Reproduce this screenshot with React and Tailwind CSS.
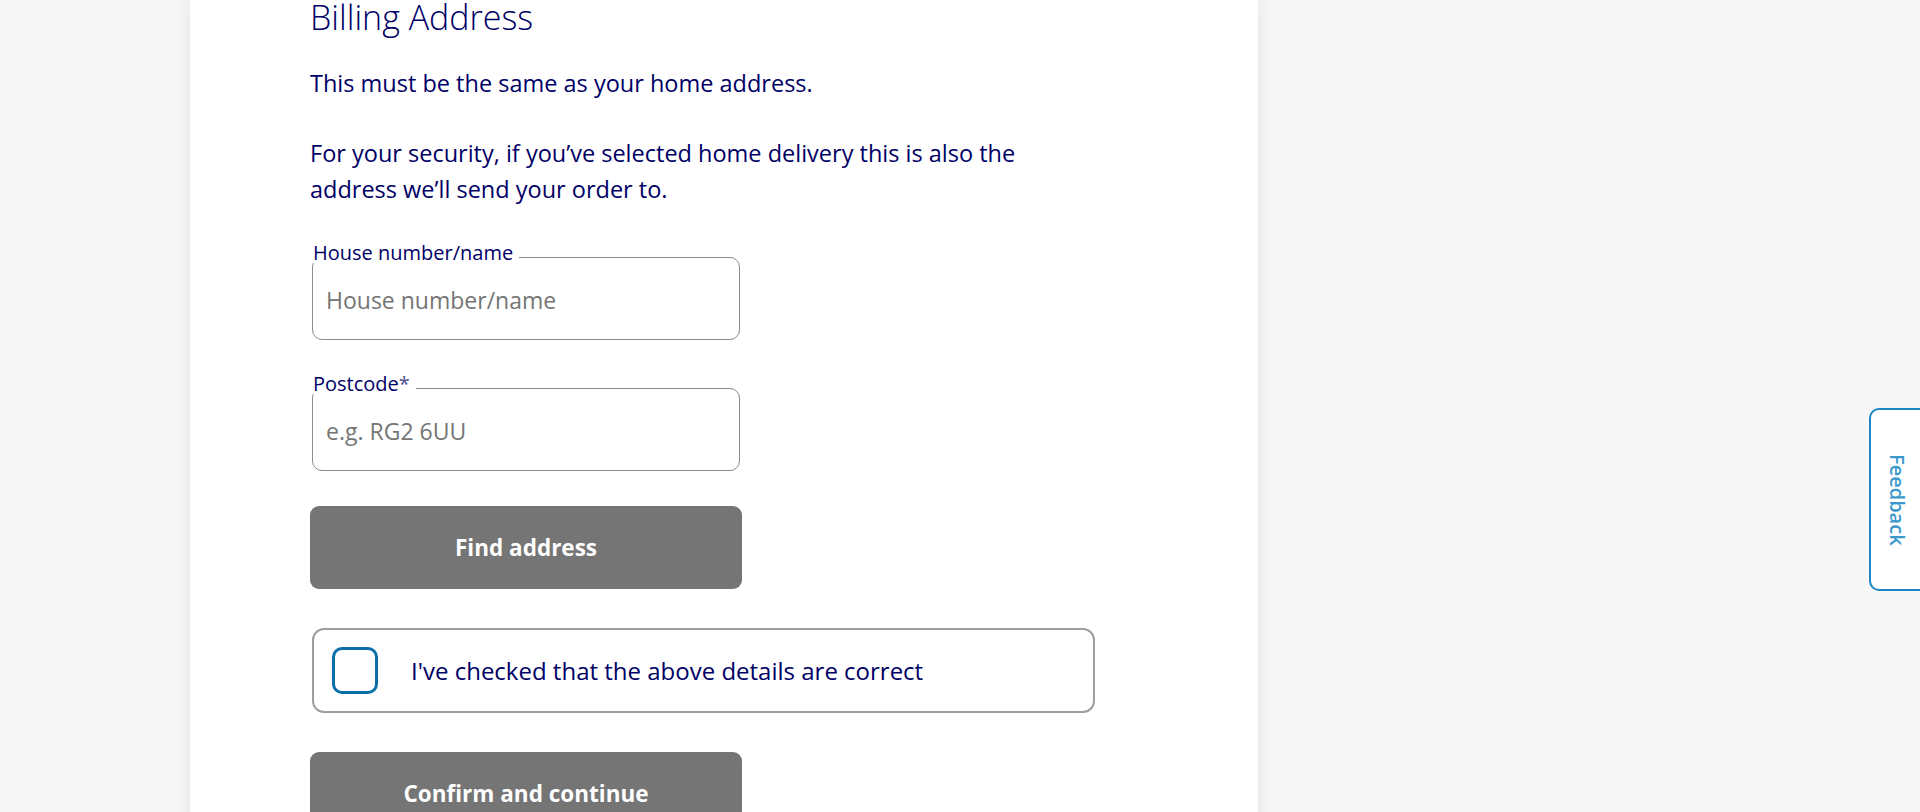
import React, { useState } from 'react'

function OutlinedField({ label, required, placeholder }) {
  return (
    <div className="relative ml-[2px] w-[428px] h-[83px] rounded-[10px] border border-[#8c8c8c] bg-white">
      {/* label sits on the top border */}
      <span className="absolute left-0 top-[-15px] bg-white pr-[6px] text-[20px] leading-[20px] text-[#000066]">
        {label}
        {required && <span className="text-[#4a4a8c]">*</span>}
      </span>
      <input
        type="text"
        placeholder={placeholder}
        className="h-full w-full rounded-[10px] bg-transparent px-[13px] pt-[2px] text-[23px] text-[#000066] outline-none placeholder:text-[#757575]"
      />
    </div>
  )
}

function GreyButton({ children }) {
  return (
    <button
      type="button"
      className="block w-[432px] h-[83px] rounded-[9px] bg-[#757575] text-[22.5px] font-bold text-white"
    >
      {children}
    </button>
  )
}

export default function App() {
  const [checked, setChecked] = useState(false)

  return (
    <div
      className="h-screen overflow-hidden bg-[#f7f7f7]"
      style={{ fontFamily: "'Open Sans', 'Noto Sans', sans-serif" }}
    >
      <div className="ml-[190px] w-[1068px] min-h-full bg-white shadow-[0_0_18px_rgba(0,0,0,0.09)] pl-[120px] pt-[3px]">
        <h1 className="text-[34px] font-light leading-[28px] text-[#000066]">
          Billing Address
        </h1>

        <div className="mt-[34px] text-[23.5px] leading-[36px] text-[#000066]">
          <p>This must be the same as your home address.</p>
          <p className="mt-[34px]">
            For your security, if you’ve selected home delivery this is also the
            <br />
            address we’ll send your order to.
          </p>
        </div>

        <div className="mt-[50px] flex flex-col">
          <OutlinedField label="House number/name" placeholder="House number/name" />
          <div className="mt-[48px]">
            <OutlinedField label="Postcode" required placeholder="e.g. RG2 6UU" />
          </div>
          <div className="mt-[35px]">
            <GreyButton>Find address</GreyButton>
          </div>

          <label className="mt-[39px] ml-[2px] flex w-[783px] h-[85px] cursor-pointer items-center rounded-[12px] border-2 border-[#9e9e9e] pl-[18px]">
            <input
              type="checkbox"
              checked={checked}
              onChange={(e) => setChecked(e.target.checked)}
              className="sr-only"
            />
            <span className="h-[47px] w-[46px] shrink-0 rounded-[10px] border-[3px] border-[#0a6fa8] bg-white" />
            <span className="ml-[33px] text-[24px] text-[#000066]">
              I've checked that the above details are correct
            </span>
          </label>

          <div className="mt-[39px]">
            <GreyButton>Confirm and continue</GreyButton>
          </div>
        </div>
      </div>

      {/* feedback tab */}
      <button
        type="button"
        className="fixed right-[-4px] top-[408px] flex h-[183px] w-[55px] items-center justify-center rounded-l-[10px] border-[2.5px] border-[#1b87c3] bg-white"
      >
        <span className="[writing-mode:vertical-rl] text-[20px] font-semibold text-[#3a98cc]">
          Feedback
        </span>
      </button>
    </div>
  )
}
